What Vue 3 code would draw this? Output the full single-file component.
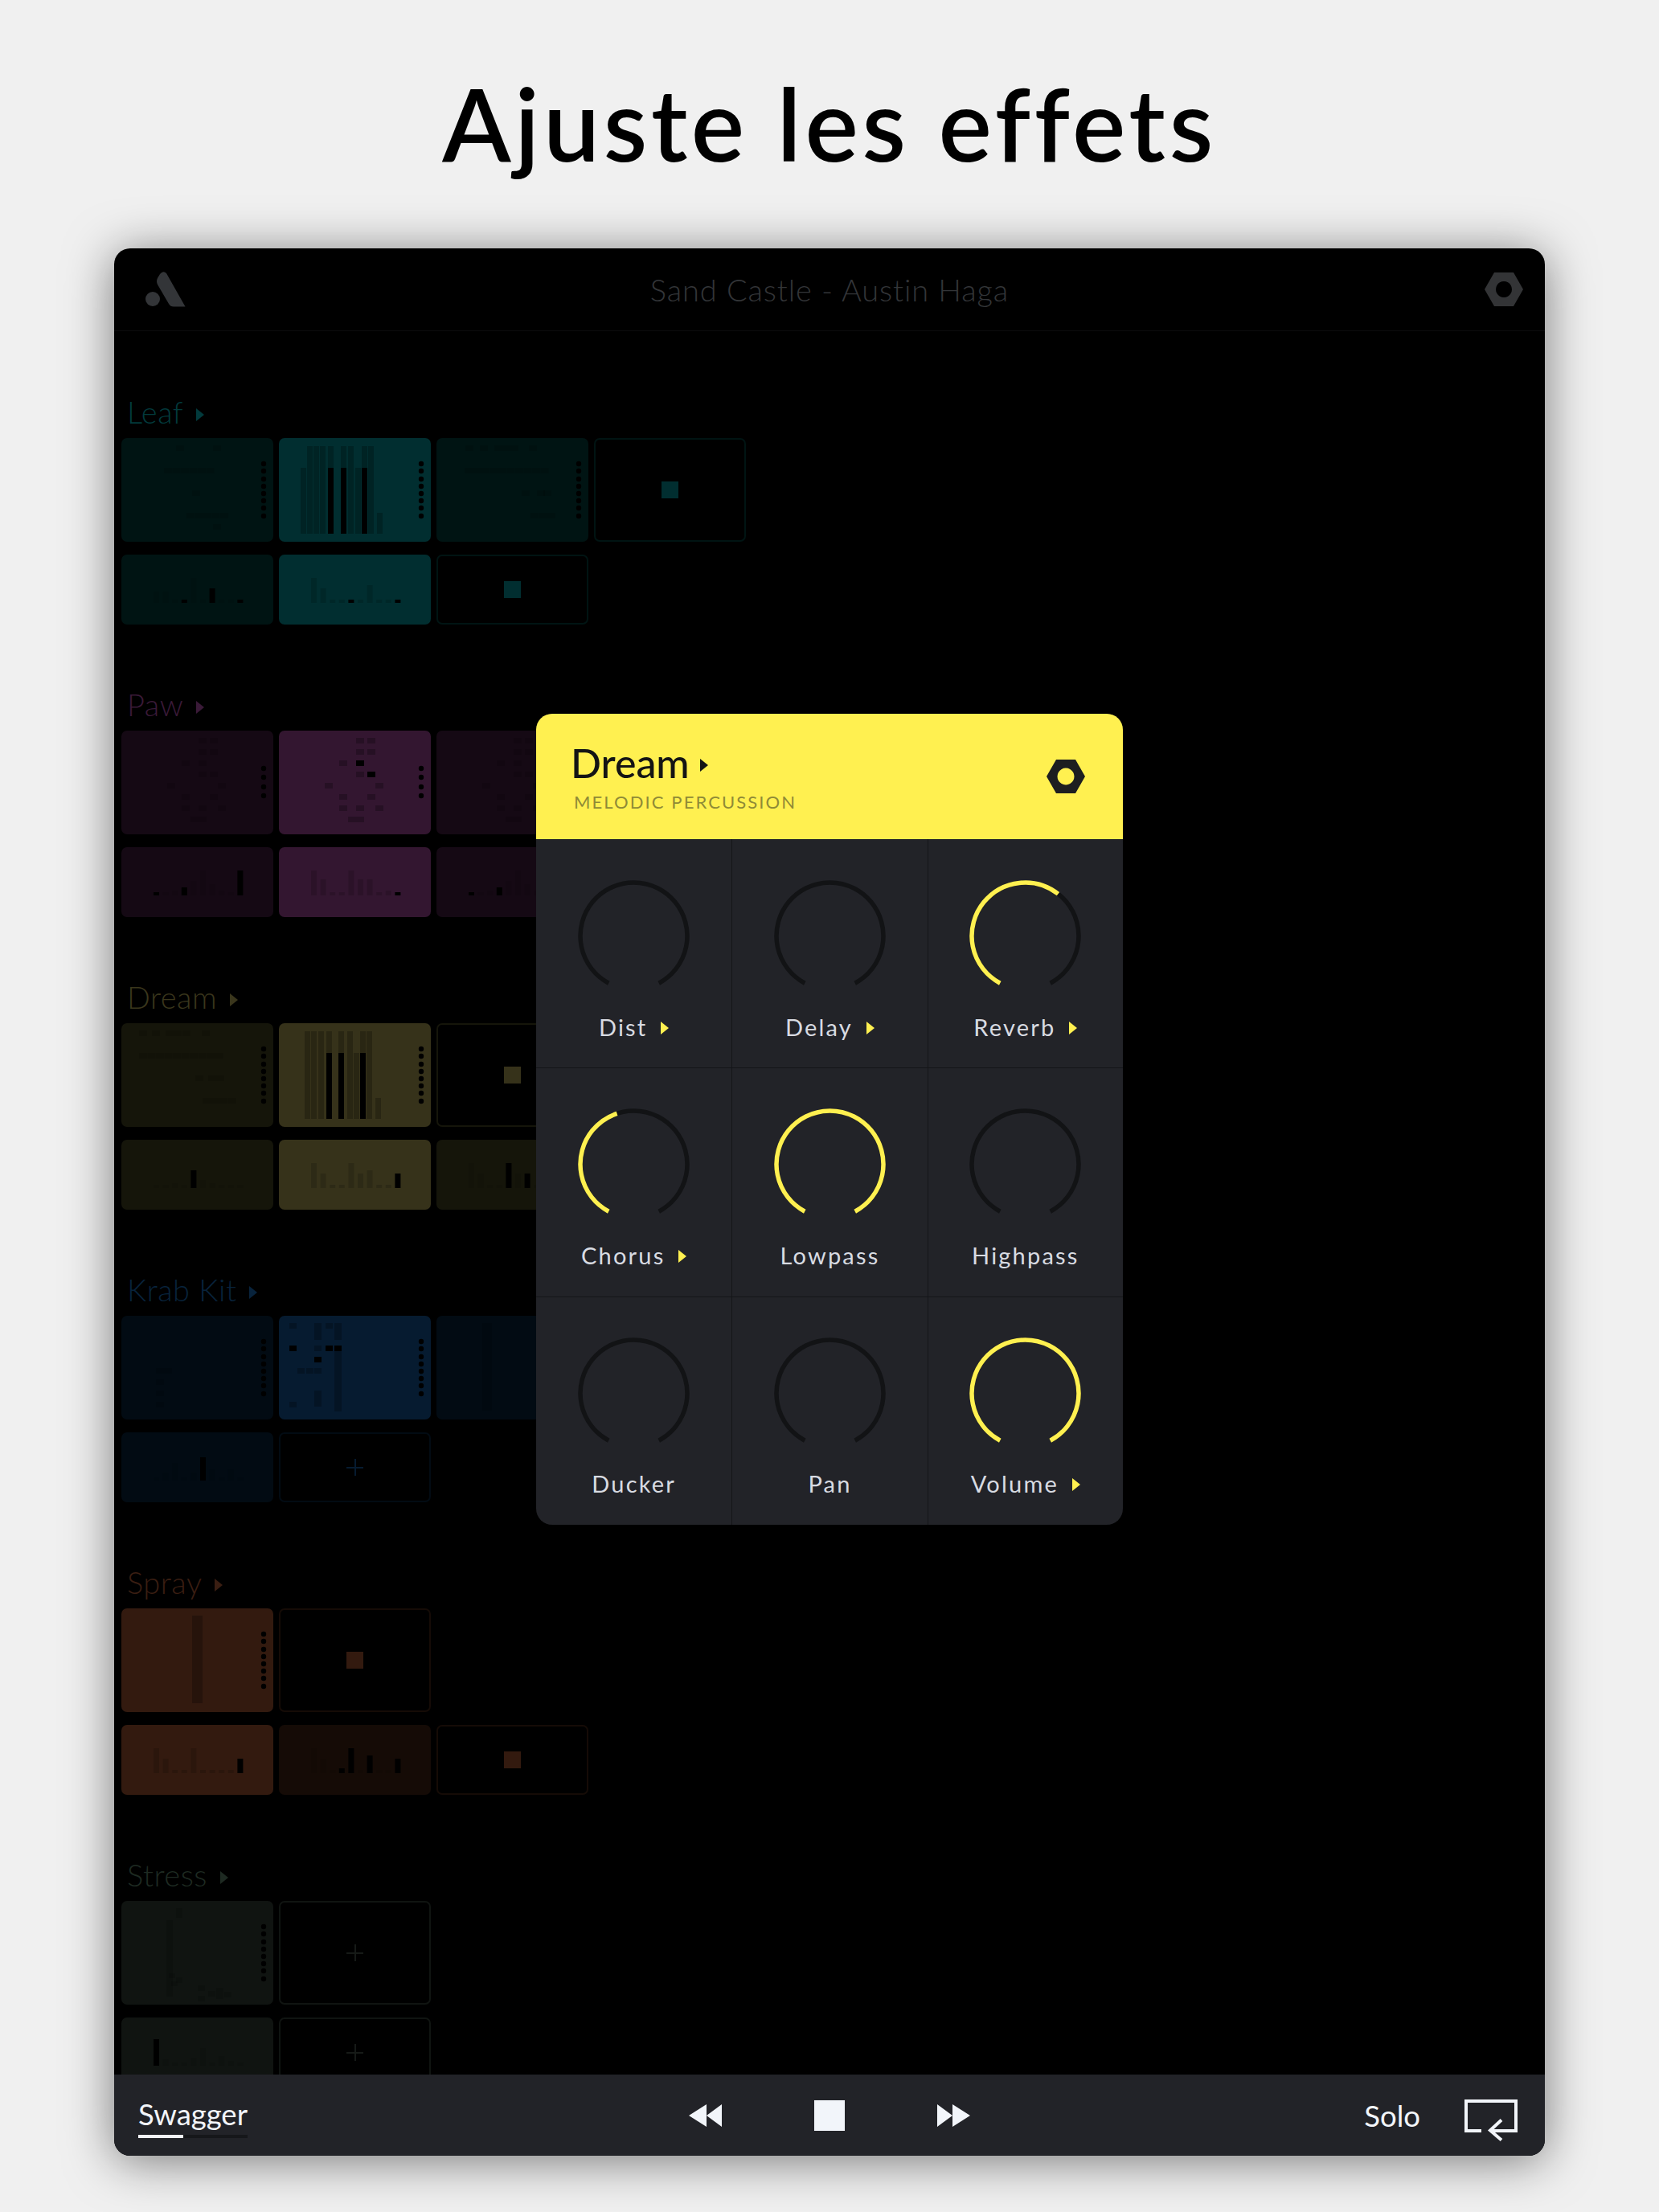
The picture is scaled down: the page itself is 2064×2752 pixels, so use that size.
<template>
  <div class="page">
    <h1 class="titre">Ajuste les effets</h1>

    <div class="ipad">
      <header class="topbar">
        <svg class="logo" width="50" height="46" viewBox="0 0 50 46">
          <circle cx="9" cy="35" r="9" />
          <path d="M18 4 Q22 -1 26 3 L49.5 44.5 L35 44.5 Q31 44.5 29 41 L15 17 Q13 13 15 9 Z" />
        </svg>
        <span class="song">Sand Castle - Austin Haga</span>
        <svg class="nut" width="48" height="42" viewBox="0 0 48 42">
          <path fill-rule="evenodd" d="M12 0 H36 L48 21 L36 42 H12 L0 21 Z M24 11 a10 10 0 1 0 0.01 0 Z" />
        </svg>
      </header>

      <div class="liste">
        <section v-for="s in sections" :key="s.nom" class="groupe" :style="{ '--on': s.on, '--off': s.off, '--txt': s.txt }">
          <div class="nom">{{ s.nom }}<i class="tri"></i></div>
          <div v-for="(rang, r) in s.rangs" :key="r" class="rang" :class="r === 0 ? 'grand' : 'petit'">
            <div v-for="(t, i) in rang" :key="i" class="tuile" :class="t.type === 'stop' || t.type === 'add' ? 'vide' : t.actif ? 'actif' : 'dim'">
              <span v-if="t.type === 'stop'" class="carre"></span>
              <span v-else-if="t.type === 'add'" class="plus"></span>
              <svg v-else width="189" :height="r === 0 ? 129 : 87" class="mini">
                <rect v-for="(c, k) in t.rects" :key="k" :x="c[0]" :y="c[1]" :width="c[2]" :height="c[3]" fill="#000" :opacity="c[4] ? 1 : opacite(t, r)" />
                <circle v-for="y in t.dots" :key="'d' + y" cx="177" :cy="y" r="3.2" fill="#000" />
              </svg>
            </div>
          </div>
        </section>
      </div>

      <footer class="transport">
        <div class="scene">
          <span>Swagger</span>
          <div class="jauge"><div class="jauge-val"></div></div>
        </div>
        <div class="boutons">
          <svg width="41" height="28" viewBox="0 0 41 28" class="ico"><path d="M0 14 L22 0 V28 Z M22 14 L41 0 V28 Z" /></svg>
          <div class="stop"></div>
          <svg width="41" height="28" viewBox="0 0 41 28" class="ico"><path d="M0 0 L19 14 L0 28 Z M19 0 L41 14 L19 28 Z" /></svg>
        </div>
        <div class="droite">
          <span>Solo</span>
          <svg width="66" height="52" viewBox="0 0 66 52" class="boucle">
            <path d="M21 39 H2 V2 H64 V39 H35" />
            <path d="M46 25.500 L32 38.500 L46 50.500" />
          </svg>
        </div>
      </footer>

      <div class="modale">
        <div class="modale-tete">
          <div>
            <div class="modale-nom">Dream<i class="tri"></i></div>
            <div class="modale-type">MELODIC PERCUSSION</div>
          </div>
          <svg width="48" height="42" viewBox="0 0 48 42">
            <path fill-rule="evenodd" fill="#1d1e20" d="M12 0 H36 L48 21 L36 42 H12 L0 21 Z M24 10.500 a10.500 10.500 0 1 0 0.01 0 Z" />
          </svg>
        </div>
        <div class="knobs">
          <div v-for="k in knobs" :key="k.nom" class="cellule">
            <svg width="139" height="139" viewBox="0 0 139 139">
              <path :d="arc" class="piste" />
              <path v-if="k.val > 0" :d="arc" class="valeur" pathLength="100" :stroke-dasharray="k.val + ' 100'" />
            </svg>
            <div class="knob-nom">{{ k.nom }}<i v-if="k.fleche" class="tri"></i></div>
          </div>
        </div>
      </div>
    </div>
  </div>
</template>

<script setup>
const knobs = [
  { nom: 'Dist', val: 0, fleche: true },
  { nom: 'Delay', val: 0, fleche: true },
  { nom: 'Reverb', val: 62.5, fleche: true },
  { nom: 'Chorus', val: 44, fleche: true },
  { nom: 'Lowpass', val: 100 },
  { nom: 'Highpass', val: 0 },
  { nom: 'Ducker', val: 0 },
  { nom: 'Pan', val: 0 },
  { nom: 'Volume', val: 100, fleche: true }
];

// arc du bouton : 304 degres, ouvert en bas
const polar = (deg) => {
  const a = (deg * Math.PI) / 180;
  return (69.5 + 66.5 * Math.sin(a)).toFixed(2) + ' ' + (69.5 - 66.5 * Math.cos(a)).toFixed(2);
};
const arc = `M${polar(-152)} A66.5 66.5 0 1 1 ${polar(152)}`;

const opacite = (t, r) => {
  if (r === 0) return t.actif ? 0.24 : 0.14;
  return t.actif ? 0.15 : 0.09;
};

const dots8 = [32, 41, 51, 60, 69, 78, 87, 97];
const dots4 = [47, 58, 70, 81];

// rect = [x, y, w, h, noir ?]
// c = [centre x, ligne, noir ?]
const grille = (cells, dots = dots8) => ({
  type: 'mini',
  dots,
  rects: cells.map((c) => [c[0] - 5, 9 + 14 * c[1], 10, 7, c[2]])
});

// barres basses des petites tuiles
const barres = (h, noirs) => ({
  type: 'mini',
  dots: [],
  rects: h.map((v, i) => [40 + 11.6 * i, 60 - v, 7, v, noirs.includes(i)])
});

// colonnes hautes : [x, haut, noir ?]
const colonnes = (cols) => ({
  type: 'mini',
  dots: dots8,
  rects: cols.flatMap((c) => {
    if (c[2]) return [[c[0], 10, 7, 27], [c[0], 37, 7, 82, true]];
    return [[c[0], c[1], 7, 119 - c[1]]];
  })
});

const on = (t) => ({ ...t, actif: true });
const stop = { type: 'stop' };
const add = { type: 'add' };

const pawCells = (b) => [
  [101, 0], [115, 0], [101, 1], [115, 1], [80, 2], [101, 2, b], [101, 3], [115, 3, b],
  [62, 4], [125, 4], [80, 5], [115, 5], [80, 6], [101, 6], [125, 6], [91, 7], [101, 7]
];
const row = (r, xs) => xs.map((x) => [x, r]);
const rangee = (r, from, to) => {
  const out = [];
  for (let x = from; x <= to; x += 10.5) out.push([x, r]);
  return out;
};

const sections = [
  {
    nom: 'Leaf', on: '#012e30', off: '#001413', txt: '#023a3c',
    rangs: [
      [
        grille([...row(0, [73, 119]), ...rangee(2, 58, 114), ...row(4, [93]), ...rangee(6, 86, 132), ...row(7, [119])]),
        on(colonnes([[27, 37], [35, 10], [43, 10], [51, 10], [61, 10, 1], [77, 10, 1], [86, 10], [95, 37], [103, 10, 1], [111, 10], [122, 93]])),
        grille([...row(0, [41, 59, 77, 87, 97, 120]), ...rangee(2, 40, 136), ...row(4, [111, 130, 138]), ...rangee(6, 122, 148)]),
        stop
      ],
      [barres([14, 14, 4, 4, 31, 4, 18, 4, 4, 4], [3, 6, 9]), on(barres([31, 18, 4, 4, 4, 4, 22, 4, 4, 4], [4, 9])), stop]
    ]
  },
  {
    nom: 'Paw', on: '#331630', off: '#150914', txt: '#3a1a38',
    rangs: [
      [grille(pawCells(false), dots4), on(grille(pawCells(true), dots4)), grille(pawCells(false), dots4)],
      [barres([4, 4, 6, 10, 18, 31, 14, 6, 4, 31], [0, 3, 9]), on(barres([31, 20, 4, 4, 31, 20, 20, 4, 6, 4], [9])), barres([4, 4, 6, 10, 18, 31, 14, 6, 4, 31], [0, 3])]
    ]
  },
  {
    nom: 'Dream', on: '#36321a', off: '#15150a', txt: '#3a361c',
    rangs: [
      [
        grille([...row(0, [27, 43, 60, 70, 81, 105]), ...rangee(2, 27, 128), ...row(4, [97, 113, 123]), ...rangee(6, 106, 140)]),
        on(colonnes([[32, 10], [40, 10], [49, 10], [59, 10, 1], [74, 10, 1], [85, 10], [93, 37], [101, 10, 1], [109, 10], [120, 93]])),
        stop
      ],
      [barres([4, 4, 6, 4, 22, 10, 6, 4, 4, 4], [4]), on(barres([31, 18, 4, 4, 31, 18, 22, 4, 4, 18], [9])), barres([31, 18, 4, 4, 31, 18, 18, 4, 4, 4], [4, 6])]
    ]
  },
  {
    nom: 'Krab Kit', on: '#061b30', off: '#020b13', txt: '#08233c',
    rangs: [
      [
        grille([[48, 4], [58, 4], [48, 5], [48, 6], [48, 7]]),
        on({
          type: 'mini',
          dots: dots8,
          rects: [
            [13, 9, 9, 7], [13, 37, 9, 7, 1], [44, 9, 9, 21], [44, 37, 9, 7], [44, 51, 9, 7, 1], [44, 65, 9, 7],
            [23, 65, 9, 7], [34, 65, 9, 7], [44, 93, 9, 20], [13, 107, 9, 7], [58, 9, 9, 7], [58, 37, 9, 7, 1],
            [69, 9, 9, 21], [69, 37, 9, 7, 1], [69, 37, 9, 82]
          ]
        }),
        { type: 'mini', dots: dots8, rects: [[57, 9, 12, 109]] }
      ],
      [barres([4, 10, 22, 4, 10, 29, 14, 4, 14, 4], [5]), add]
    ]
  },
  {
    nom: 'Spray', on: '#331a0f', off: '#150b06', txt: '#3a1e12',
    rangs: [
      [on({ type: 'mini', dots: dots8, rects: [[88, 9, 13, 109]] }), stop],
      [on(barres([31, 18, 4, 4, 31, 4, 4, 4, 4, 18], [9])), barres([31, 18, 4, 6, 31, 4, 22, 4, 4, 18], [3, 4, 6, 9]), stop]
    ]
  },
  {
    nom: 'Stress', on: '#161a17', off: '#101411', txt: '#1e2a22',
    rangs: [
      [
        {
          type: 'mini',
          dots: dots8,
          rects: [[68, 9, 8, 12], [56, 24, 8, 95], [59, 90, 8, 6], [68, 95, 8, 7], [62, 100, 8, 6], [95, 105, 9, 7], [95, 118, 9, 7], [108, 112, 9, 7], [118, 108, 9, 14], [128, 113, 9, 7]]
        },
        add
      ],
      [barres([33, 8, 4, 4, 10, 22, 4, 12, 6, 4], [0]), add]
    ]
  }
];
</script>

<style>
html, body { margin: 0; background: #f0f0f0; }
</style>

<style scoped>
.page { width: 2064px; height: 2752px; overflow: hidden; background: #f0f0f0; font-family: Lato, "Noto Sans", sans-serif; }
.titre { height: 309px; margin: 0; box-sizing: border-box; padding-top: 78px; text-align: center; font-size: 125px; line-height: 150px; font-weight: 600; letter-spacing: 4.650px; color: #000; }

.ipad { position: relative; width: 1780px; height: 2373px; margin: 0 auto; display: flex; flex-direction: column; background: #000; border-radius: 20px; overflow: hidden; box-shadow: 0 6px 60px rgba(0, 0, 0, 0.5); }

.topbar { flex: none; height: 102px; border-bottom: 1px solid #0b0b0c; display: grid; grid-template-columns: 1fr auto 1fr; align-items: center; padding: 0 27px 0 39px; }
.topbar .nut { justify-self: end; }
.logo { fill: #333538; }
.nut { fill: #333436; }
.song { font-size: 38px; font-weight: 300; letter-spacing: 0.9px; color: #333538; margin-right: 12px; }

.liste { flex: 1; min-height: 0; overflow: hidden; padding: 1px 0 0 9px; }
.groupe { height: 364px; box-sizing: border-box; padding-top: 72px; }
.nom { height: 60px; box-sizing: border-box; padding: 0 0 6px 7px; display: flex; align-items: center; gap: 16px; font-size: 38px; font-weight: 300; letter-spacing: 0.5px; color: var(--txt); }
.tri { display: inline-block; width: 0; height: 0; border-style: solid; border-width: 8px 0 8px 10px; border-color: transparent transparent transparent currentColor; margin-top: 7px; }

.rang { display: flex; gap: 7px; }
.rang.grand { height: 129px; margin-bottom: 16px; }
.rang.petit { height: 87px; }
.tuile { width: 189px; box-sizing: border-box; border-radius: 7px; display: flex; align-items: center; justify-content: center; overflow: hidden; flex: none; }
.tuile.actif { background: var(--on); }
.tuile.dim { background: var(--off); }
.tuile.vide { border: 2px solid var(--off); background: #000; }
.mini { display: block; flex: none; }
.carre { width: 21px; height: 21px; background: var(--on); }
.plus { width: 21px; height: 21px; background: linear-gradient(var(--on), var(--on)) center / 21px 2px no-repeat, linear-gradient(var(--on), var(--on)) center / 2px 21px no-repeat; }

.transport { flex: none; height: 101px; background: #222328; display: grid; grid-template-columns: 1fr auto 1fr; align-items: center; padding: 0 34px 0 30px; color: #f2f5fa; font-size: 36.500px; font-weight: 400; }
.scene { justify-self: start; width: 136px; margin-top: 5px; line-height: 44px; white-space: nowrap; }
.jauge { height: 4px; margin-top: 4px; background: #16171a; }
.jauge-val { width: 56px; height: 4px; background: #f2f5fa; }
.boutons { display: flex; align-items: center; gap: 115px; margin-left: 4px; }
.ico { fill: #f2f5fa; display: block; }
.stop { width: 38px; height: 38px; background: #f2f5fa; }
.droite { justify-self: end; display: flex; align-items: center; gap: 55px; }
.boucle { fill: none; stroke: #f2f5fa; stroke-width: 4; display: block; margin-top: 12px; }

.modale { position: absolute; left: 525px; top: 579px; width: 730px; height: 1009px; border-radius: 20px; overflow: hidden; background: #222328; display: flex; flex-direction: column; }
.modale-tete { flex: none; height: 156px; box-sizing: border-box; background: #fff050; padding: 31px 47px 0 43px; display: flex; justify-content: space-between; align-items: flex-start; }
.modale-tete svg { margin-top: 26px; }
.modale-nom { display: flex; align-items: center; gap: 13px; font-size: 50px; line-height: 60px; font-weight: 500; color: #141414; }
.modale-nom .tri { margin-top: 6px; }
.modale-type { margin: 5px 0 0 4px; font-size: 22px; line-height: 28px; letter-spacing: 2.100px; color: #8f8a36; }

.knobs { flex: 1; min-height: 0; display: grid; grid-template-columns: repeat(3, 1fr); grid-template-rows: repeat(3, 1fr); }
.cellule { display: flex; flex-direction: column; align-items: center; padding-top: 51px; box-sizing: border-box; min-width: 0; }
.cellule:not(:nth-child(3n+1)) { border-left: 1px solid #141518; }
.cellule:nth-child(n+4) { border-top: 1px solid #141518; padding-top: 50px; }
.cellule svg { display: block; flex: none; }
.piste { fill: none; stroke: #121315; stroke-width: 5.500; }
.valeur { fill: none; stroke: #fff050; stroke-width: 5.500; }
.knob-nom { margin-top: 23px; height: 40px; display: flex; align-items: center; gap: 17px; font-size: 29px; font-weight: 400; letter-spacing: 2.200px; color: #d8dbe2; }
.knob-nom .tri { color: #fff050; margin-top: 3px; }
</style>
